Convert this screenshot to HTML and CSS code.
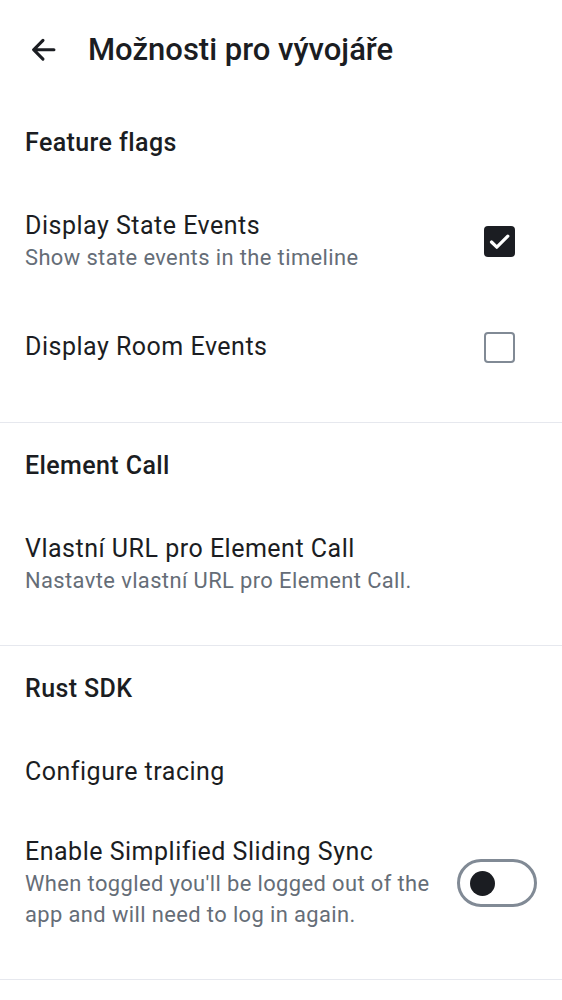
FILE: index.html
```html
<!DOCTYPE html>
<html lang="cs">
<head>
<meta charset="utf-8">
<title>Možnosti pro vývojáře</title>
<link rel="stylesheet" href="styles.css">
</head>
<body>
<header class="appbar">
  <span class="back">
    <svg viewBox="0 0 24 24" width="37.5" height="37.5"><path d="M12.207 5.293a1 1 0 0 1 0 1.414L7.914 11H18.5a1 1 0 1 1 0 2H7.914l4.293 4.293a1 1 0 0 1-1.414 1.414l-6-6a1 1 0 0 1 0-1.414l6-6a1 1 0 0 1 1.414 0Z" fill="#1b1d22"/></svg>
  </span>
  <h1 class="appbar-title">Možnosti pro vývojáře</h1>
</header>
<main>
  <section class="section">
    <h2 class="section-title">Feature flags</h2>
    <div class="item item-check">
      <div class="item-text">
        <div class="item-title">Display State Events</div>
        <div class="item-sub">Show state events in the timeline</div>
      </div>
      <span class="checkbox checked">
        <svg viewBox="0 0 31 31" width="31" height="31"><path d="M7.5 16 L12.8 21.2 L23.8 10.2" fill="none" stroke="#fff" stroke-width="3.2" stroke-linecap="round" stroke-linejoin="round"/></svg>
      </span>
    </div>
    <div class="item item-check">
      <div class="item-text">
        <div class="item-title">Display Room Events</div>
      </div>
      <span class="checkbox"></span>
    </div>
  </section>
  <section class="section">
    <h2 class="section-title">Element Call</h2>
    <div class="item">
      <div class="item-text">
        <div class="item-title">Vlastní URL pro Element Call</div>
        <div class="item-sub">Nastavte vlastní URL pro Element Call.</div>
      </div>
    </div>
  </section>
  <section class="section">
    <h2 class="section-title">Rust SDK</h2>
    <div class="item">
      <div class="item-text">
        <div class="item-title">Configure tracing</div>
      </div>
    </div>
    <div class="item">
      <div class="item-text">
        <div class="item-title">Enable Simplified Sliding Sync</div>
        <div class="item-sub">When toggled you'll be logged out of the app and will need to log in again.</div>
      </div>
      <span class="switch"><span class="knob"></span></span>
    </div>
  </section>
</main>
</body>
</html>
```
FILE: styles.css
```css
* { box-sizing: border-box; }
html, body { margin: 0; padding: 0; background: #fff; }
body {
  font-family: Roboto, "Noto Sans", sans-serif;
  color: #1b1d22;
  width: 562px;
}
.appbar {
  height: 100px;
  display: flex;
  align-items: center;
}
.back {
  display: flex;
  margin-left: 25px;
  width: 37.5px;
  height: 37.5px;
}
.appbar-title {
  margin: 0 0 0 25.5px;
  font-size: 31px;
  font-weight: 500;
  line-height: 36px;
}
.section {
  border-bottom: 1px solid #e6e8ee;
  padding-bottom: 25px;
}
.section-title {
  margin: 0;
  padding: 28px 25px 28px;
  font-size: 25px;
  font-weight: 500;
  line-height: 30px;
  letter-spacing: 0.4px;
}
.item {
  display: flex;
  align-items: center;
  gap: 20px;
  padding: 24px 25px;
}
.item-check { min-height: 100px; padding-right: 47px; }
.item-text { flex: 1; min-width: 0; }
.item-title {
  font-size: 25px;
  line-height: 32px;
  letter-spacing: 0.5px;
}
.item-sub {
  font-size: 21.9px;
  line-height: 31px;
  letter-spacing: 0.4px;
  color: #656d77;
}
.checkbox {
  flex: none;
  width: 31px;
  height: 31px;
  border-radius: 4px;
  border: 2.5px solid #818a95;
  display: flex;
}
.checkbox.checked {
  border: none;
  background: #1b1d22;
}
.switch {
  flex: none;
  width: 80px;
  height: 48px;
  border: 3px solid #818a95;
  border-radius: 24px;
  display: flex;
  align-items: center;
  padding-left: 10px;
}
.knob {
  width: 25px;
  height: 25px;
  border-radius: 50%;
  background: #1b1d22;
}
```
